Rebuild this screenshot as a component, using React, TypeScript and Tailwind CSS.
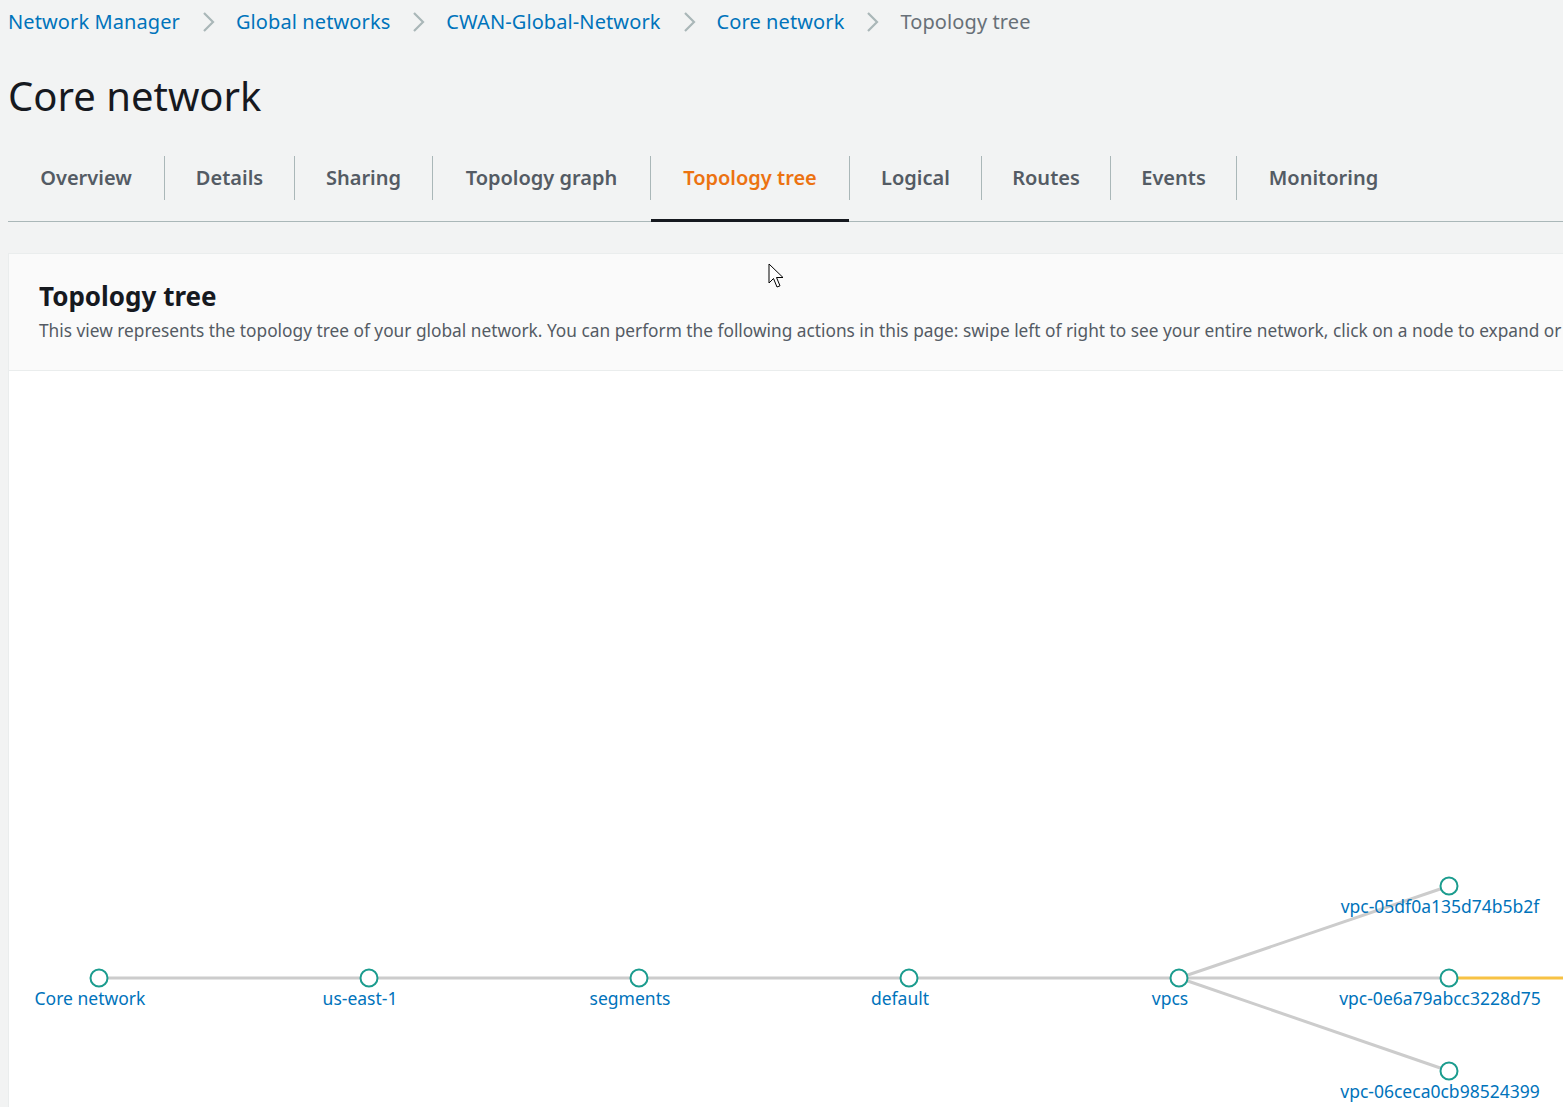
import React from 'react'

const crumbs = ['Network Manager', 'Global networks', 'CWAN-Global-Network', 'Core network']

const tabs = [
  { label: 'Overview', w: 'w-[156px]' },
  { label: 'Details', w: 'w-[130px]' },
  { label: 'Sharing', w: 'w-[138px]' },
  { label: 'Topology graph', w: 'w-[218px]' },
  { label: 'Topology tree', w: 'w-[199px]', active: true },
  { label: 'Logical', w: 'w-[132px]' },
  { label: 'Routes', w: 'w-[129px]' },
  { label: 'Events', w: 'w-[126px]' },
  { label: 'Monitoring', w: 'w-[174px]' },
]

// node positions relative to the card body (body top = 371, card left = 8)
const nodes = [
  { x: 90, y: 607, label: 'Core network' },
  { x: 360, y: 607, label: 'us-east-1' },
  { x: 630, y: 607, label: 'segments' },
  { x: 900, y: 607, label: 'default' },
  { x: 1170, y: 607, label: 'vpcs' },
  { x: 1440, y: 515, label: 'vpc-05df0a135d74b5b2f' },
  { x: 1440, y: 607, label: 'vpc-0e6a79abcc3228d75' },
  { x: 1440, y: 700, label: 'vpc-06ceca0cb98524399' },
]

const links: [number, number][] = [
  [0, 1],
  [1, 2],
  [2, 3],
  [3, 4],
  [4, 5],
  [4, 6],
  [4, 7],
]

const Chevron = () => (
  <svg width="14" height="22" viewBox="0 0 14 22" className="mx-[21px]">
    <path d="M3 2 L12 11 L3 20" fill="none" stroke="#aab7b8" strokeWidth="2.2" />
  </svg>
)

const App = () => {
  return (
    <div
      className="w-[1563px] h-[1107px] overflow-hidden bg-[#f2f3f3] text-[#16191f]"
      style={{ fontFamily: '"Noto Sans", "Open Sans", sans-serif' }}
    >
      <div className="pl-2">
        {/* breadcrumbs */}
        <nav className="flex items-center h-[44px] text-[20px] tracking-[0.1px] whitespace-nowrap">
          {crumbs.map((c) => (
            <React.Fragment key={c}>
              <span className="text-[#0073bb]">{c}</span>
              <Chevron />
            </React.Fragment>
          ))}
          <span className="text-[#687078]">Topology tree</span>
        </nav>

        <h1 className="h-[106px] pt-[28px] text-[40px] leading-[48px] font-normal">Core network</h1>

        {/* tabs */}
        <div className="flex w-[1600px] border-b border-[#aab7b8] h-[72px] pt-[6px]">
          {tabs.map((t, i) => (
            <div
              key={t.label}
              className={`${t.w} relative flex items-center justify-center h-[44px] ${
                i > 0 ? 'border-l border-[#aab7b8]' : ''
              }`}
            >
              <span
                className={`text-[20px] font-semibold ${t.active ? 'text-[#ec7211]' : 'text-[#545b64]'}`}
              >
                {t.label}
              </span>
              {t.active && <div className="absolute left-0 right-0 top-[63px] h-[3px] bg-[#16191f]" />}
            </div>
          ))}
        </div>

        {/* card */}
        <div className="mt-[31px] w-[1600px] border-l border-t border-[#eaeded] bg-white relative">
          <div className="bg-[#fafafa] border-b border-[#eaeded] h-[117px] pl-[30px] pt-[23px] whitespace-nowrap overflow-hidden">
            <h2 className="text-[26px] font-bold leading-[38px]">Topology tree</h2>
            <p className="text-[17.3px] text-[#545b64] leading-[24px] mt-[4px]">
              This view represents the topology tree of your global network. You can perform the following actions in
              this page: swipe left of right to see your entire network, click on a node to expand or collapse it.
            </p>
          </div>

          <div className="relative h-[760px]">
            <svg className="absolute inset-0" width="1600" height="760">
              {links.map(([a, b]) => (
                <line
                  key={`${a}-${b}`}
                  x1={nodes[a].x}
                  y1={nodes[a].y}
                  x2={nodes[b].x}
                  y2={nodes[b].y}
                  stroke="#cccccc"
                  strokeWidth="3"
                />
              ))}
              <line x1={1449} y1={607} x2={1600} y2={607} stroke="#f7c244" strokeWidth="3" />
              {nodes.map((n) => (
                <circle key={n.label} cx={n.x} cy={n.y} r="8.5" fill="#ffffff" stroke="#1b9c8e" strokeWidth="2" />
              ))}
            </svg>
            {nodes.map((n) => (
              <div
                key={n.label}
                className="absolute w-[260px] -ml-[130px] text-center text-[17.5px] leading-[22px] text-[#0073bb] whitespace-nowrap"
                style={{ left: n.x - 9, top: n.y + 9 }}
              >
                {n.label}
              </div>
            ))}
          </div>

          {/* mouse pointer */}
          <svg className="absolute left-[759px] top-[9px]" width="20" height="28" viewBox="0 0 20 28">
            <path
              d="M1 1 L1 20 L5.5 15.5 L9 24 L12 22.8 L8.5 14.5 L15 14.5 Z"
              fill="#ffffff"
              stroke="#000000"
              strokeWidth="1"
              strokeLinejoin="round"
            />
          </svg>
        </div>
      </div>
    </div>
  )
}

export default App
